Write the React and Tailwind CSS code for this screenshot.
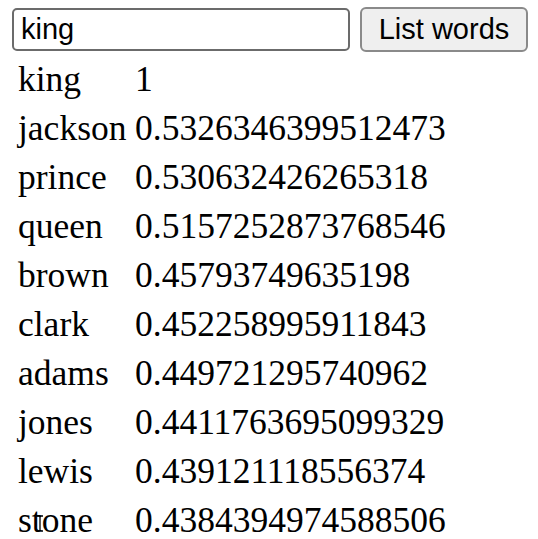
import { useState } from 'react';

const rows = [
  ['king', '1'],
  ['jackson', '0.5326346399512473'],
  ['prince', '0.530632426265318'],
  ['queen', '0.5157252873768546'],
  ['brown', '0.45793749635198'],
  ['clark', '0.452258995911843'],
  ['adams', '0.449721295740962'],
  ['jones', '0.4411763695099329'],
  ['lewis', '0.439121118556374'],
  ['stone', '0.4384394974588506'],
];

export default function App() {
  const [word, setWord] = useState('king');

  return (
    <div className="relative w-[538px] h-[539px] overflow-hidden bg-white text-black">
      <div className="flex items-center gap-[10px] pl-[12px] pt-[7px] font-['Liberation_Sans',Arial,sans-serif] text-[29px]">
        <input
          value={word}
          onChange={(e) => setWord(e.target.value)}
          className="w-[338px] h-[43px] border-2 border-[#6b6b6b] rounded-[5px] px-[7px] outline-none"
        />
        <button className="h-[45px] w-[168px] border-2 border-[#8a8a8a] rounded-[6px] bg-[#efefef] leading-none">
          List words
        </button>
      </div>
      <div className="grid grid-cols-[117px_1fr] pl-[18px] pt-[3px] font-['Liberation_Serif','Times_New_Roman',serif] text-[35.5px]">
        {rows.map(([w, s]) => (
          <div key={w} className="contents">
            <div className="h-[49px] flex items-center">{w}</div>
            <div className="h-[49px] flex items-center">{s}</div>
          </div>
        ))}
      </div>
      <svg className="absolute left-[36px] top-[515px]" width="8" height="17" viewBox="0 0 8 17">
        <path d="M1 1h2l1 1 1-1h2M4 2v13M1 16h2l1-1 1 1h2" fill="none" stroke="#000" strokeWidth="1.3" />
      </svg>
    </div>
  );
}
